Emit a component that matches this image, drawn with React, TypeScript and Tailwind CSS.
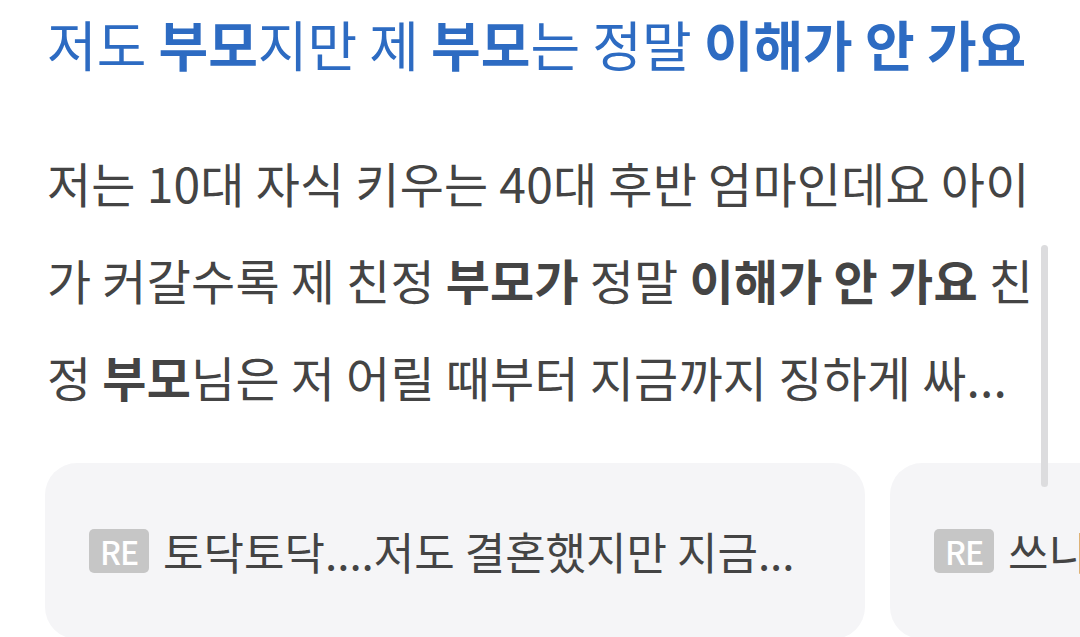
import React from "react";

const FONT = "font-['Noto_Sans_CJK_KR','Noto_Sans',sans-serif]";

function Badge() {
  return (
    <span className="mr-[14px] inline-flex h-[44px] w-[60px] shrink-0 items-center justify-center rounded-[5px] bg-[#c6c6c6] text-[32px] font-medium tracking-[-1px] text-white">
      RE
    </span>
  );
}

function ReplyCard({ text }: { text: string }) {
  return (
    <div className="flex h-[176px] w-[820px] shrink-0 items-center rounded-[32px] bg-[#f5f5f7] pl-[44px]">
      <Badge />
      <span className="whitespace-nowrap text-[44px] leading-none text-[#444]">{text}</span>
    </div>
  );
}

export default function App() {
  return (
    <div className={`relative h-[637px] w-[1080px] overflow-hidden bg-white ${FONT}`}>
      <div className="pl-[47px] pt-[11px]">
        <h1 className="whitespace-nowrap text-[54px] leading-[66px] text-[#2d6bc2]">
          저도 <b className="font-bold">부모</b>지만 제 <b className="font-bold">부모</b>는 정말{" "}
          <b className="font-bold">이해가 안 가요</b>
        </h1>

        <div className="mt-[57px] text-[48px] leading-[97px] tracking-[0.2px] text-[#444]">
          <p className="whitespace-nowrap">저는 10대 자식 키우는 40대 후반 엄마인데요 아이</p>
          <p className="whitespace-nowrap">
            가 커갈수록 제 친정 <b className="font-bold">부모가</b> 정말{" "}
            <b className="font-bold">이해가 안 가요</b> 친
          </p>
          <p className="whitespace-nowrap">
            정 <b className="font-bold">부모</b>님은 저 어릴 때부터 지금까지 징하게 싸...
          </p>
        </div>
      </div>

      <div className="mt-[38px] flex gap-[25px] pl-[45px]">
        <ReplyCard text="토닥토닥....저도 결혼했지만 지금..." />
        <ReplyCard text="쓰니..." />
      </div>

      {/* scrollbar */}
      <div className="absolute left-[1041px] top-[245px] h-[242px] w-[7px] rounded-full bg-[#dcdcde]" />
    </div>
  );
}
